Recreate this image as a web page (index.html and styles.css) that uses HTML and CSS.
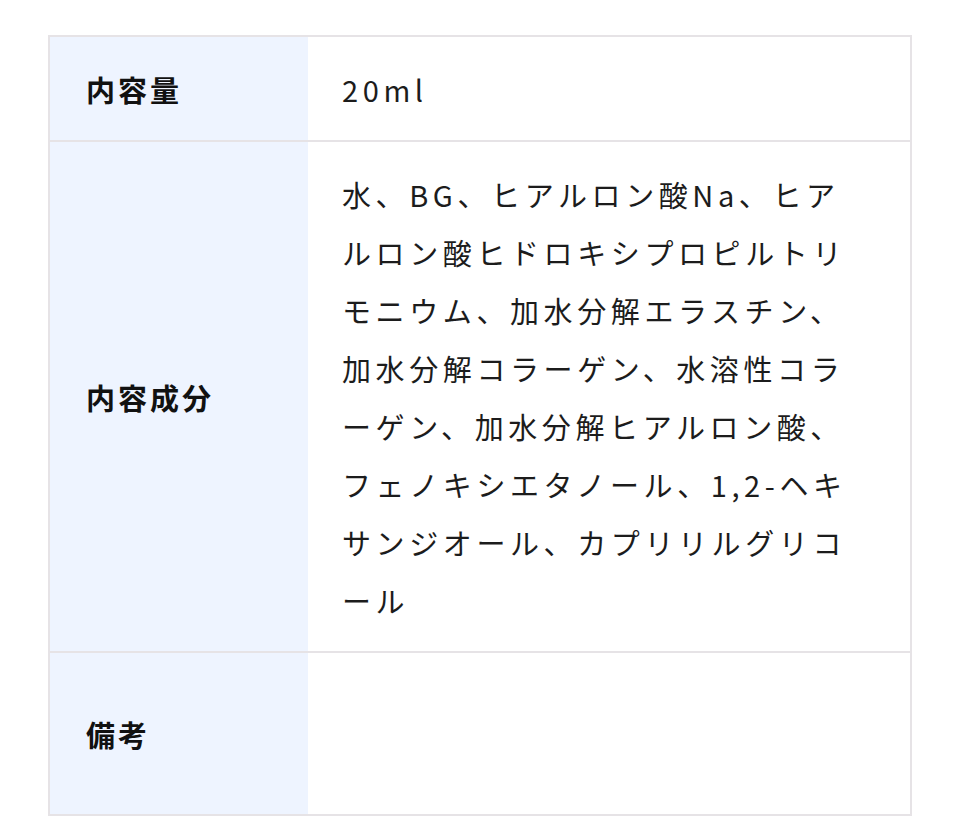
FILE: index.html
```html
<!DOCTYPE html>
<html lang="ja">
<head>
<meta charset="utf-8">
<link rel="stylesheet" href="styles.css">
</head>
<body>
<div class="page">
  <div class="spec">
    <div class="row">
      <div class="head">内容量</div>
      <div class="body">20ml</div>
    </div>
    <div class="row">
      <div class="head">内容成分</div>
      <div class="body">水、BG、ヒアルロン酸Na、ヒアルロン酸ヒドロキシプロピルトリモニウム、加水分解エラスチン、加水分解コラーゲン、水溶性コラーゲン、加水分解ヒアルロン酸、フェノキシエタノール、1,2-ヘキサンジオール、カプリリルグリコール</div>
    </div>
    <div class="row">
      <div class="head">備考</div>
      <div class="body body-empty"></div>
    </div>
  </div>
</div>
</body>
</html>
```

FILE: styles.css
```css
html, body {
  margin: 0;
  padding: 0;
  background: #ffffff;
}
.page {
  padding: 35px 48px;
  font-family: "Noto Sans CJK JP", "Noto Sans", sans-serif;
}
.spec {
  border: 2px solid #e6e3e6;
}
.row {
  display: grid;
  grid-template-columns: 258px 1fr;
  border-bottom: 2px solid #e6e3e6;
}
.row:last-child {
  border-bottom: none;
}
.head {
  background: #eef4ff;
  display: flex;
  align-items: center;
  padding: 0 0 0 36px;
  font-size: 29px;
  font-weight: 700;
  letter-spacing: 3px;
  color: #111111;
}
.body {
  padding: 23px 52px 22px 34px;
  font-size: 29px;
  line-height: 58px;
  letter-spacing: 4.6px;
  color: #1c1c1c;
  line-break: loose;
}
.body-empty {
  min-height: 116px;
}
```
